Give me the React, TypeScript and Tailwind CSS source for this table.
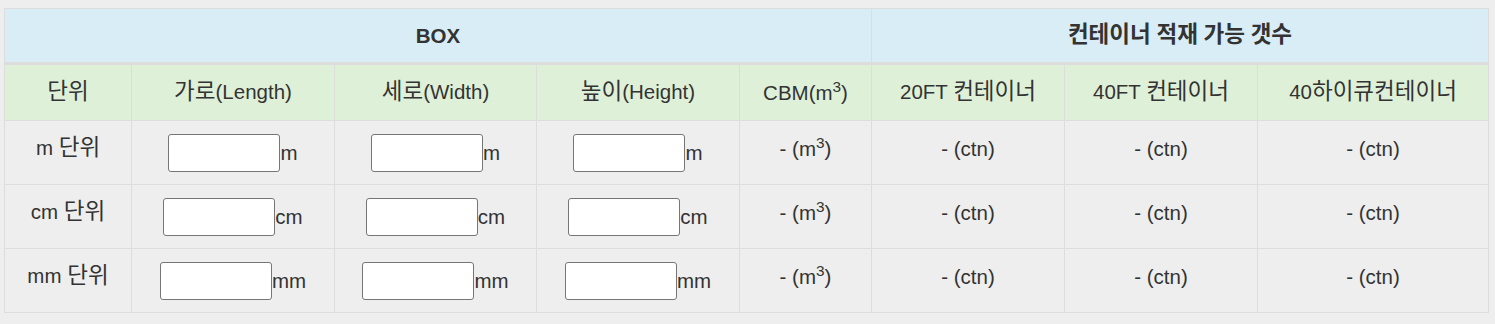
import React from "react";

const cols = "grid grid-cols-[126px_202px_201px_202px_131px_192px_192px_230px] gap-x-[1px]";

const units = [
  { label: "m 단위", u: "m" },
  { label: "cm 단위", u: "cm" },
  { label: "mm 단위", u: "mm" },
];

function K({ t }: { t: string }) {
  const parts = t.split(/([\uAC00-\uD7A3]+)/);
  return (
    <span>
      {parts.map((p, i) =>
        /[\uAC00-\uD7A3]/.test(p) ? (
          <span key={i} className="text-[22.5px]">
            {p}
          </span>
        ) : (
          <React.Fragment key={i}>{p}</React.Fragment>
        )
      )}
    </span>
  );
}

function InputCell({ u }: { u: string }) {
  return (
    <div className="bg-[#eeeeee] flex items-center justify-center">
      <div className="flex items-baseline">
        <input
          type="text"
          className="w-[112px] h-[38px] bg-white border border-[#767676] rounded-[3px] text-[20.5px] px-[3px] outline-none"
        />
        <span>{u}</span>
      </div>
    </div>
  );
}

function TextCell({ children }: { children: React.ReactNode }) {
  return (
    <div className="bg-[#eeeeee] flex items-center justify-center pb-[8px]">
      <span>{children}</span>
    </div>
  );
}

export default function App() {
  return (
    <div
      className="bg-[#eeeeee] h-[324px] pt-[8px] pl-[4px] text-[#333333] text-[20.5px] leading-[1.42857]"
      style={{ fontFamily: '"Liberation Sans", Arial, "Noto Sans CJK KR", sans-serif' }}
    >
      <div className="w-[1485px] bg-[#dddddd] p-[1px] flex flex-col gap-y-[1px]">
        <div className={`${cols} h-[53px] mb-[2px]`}>
          <div className="col-span-5 bg-[#d9edf7] flex items-center justify-center font-bold">BOX</div>
          <div className="col-span-3 bg-[#d9edf7] flex items-center justify-center font-bold">
            <K t="컨테이너 적재 가능 갯수" />
          </div>
        </div>
        <div className={`${cols} h-[55px]`}>
          {[
            "단위",
            "가로(Length)",
            "세로(Width)",
            "높이(Height)",
            null,
            "20FT 컨테이너",
            "40FT 컨테이너",
            "40하이큐컨테이너",
          ].map((t, i) => (
            <div key={i} className="bg-[#dff0d8] flex items-center justify-center">
              {t === null ? (
                <span>
                  CBM(m<sup>3</sup>)
                </span>
              ) : (
                <K t={t} />
              )}
            </div>
          ))}
        </div>
        {units.map((r) => (
          <div key={r.u} className={`${cols} h-[63px]`}>
            <TextCell>
              <K t={r.label} />
            </TextCell>
            <InputCell u={r.u} />
            <InputCell u={r.u} />
            <InputCell u={r.u} />
            <TextCell>
              - (m<sup>3</sup>)
            </TextCell>
            <TextCell>- (ctn)</TextCell>
            <TextCell>- (ctn)</TextCell>
            <TextCell>- (ctn)</TextCell>
          </div>
        ))}
      </div>
    </div>
  );
}
